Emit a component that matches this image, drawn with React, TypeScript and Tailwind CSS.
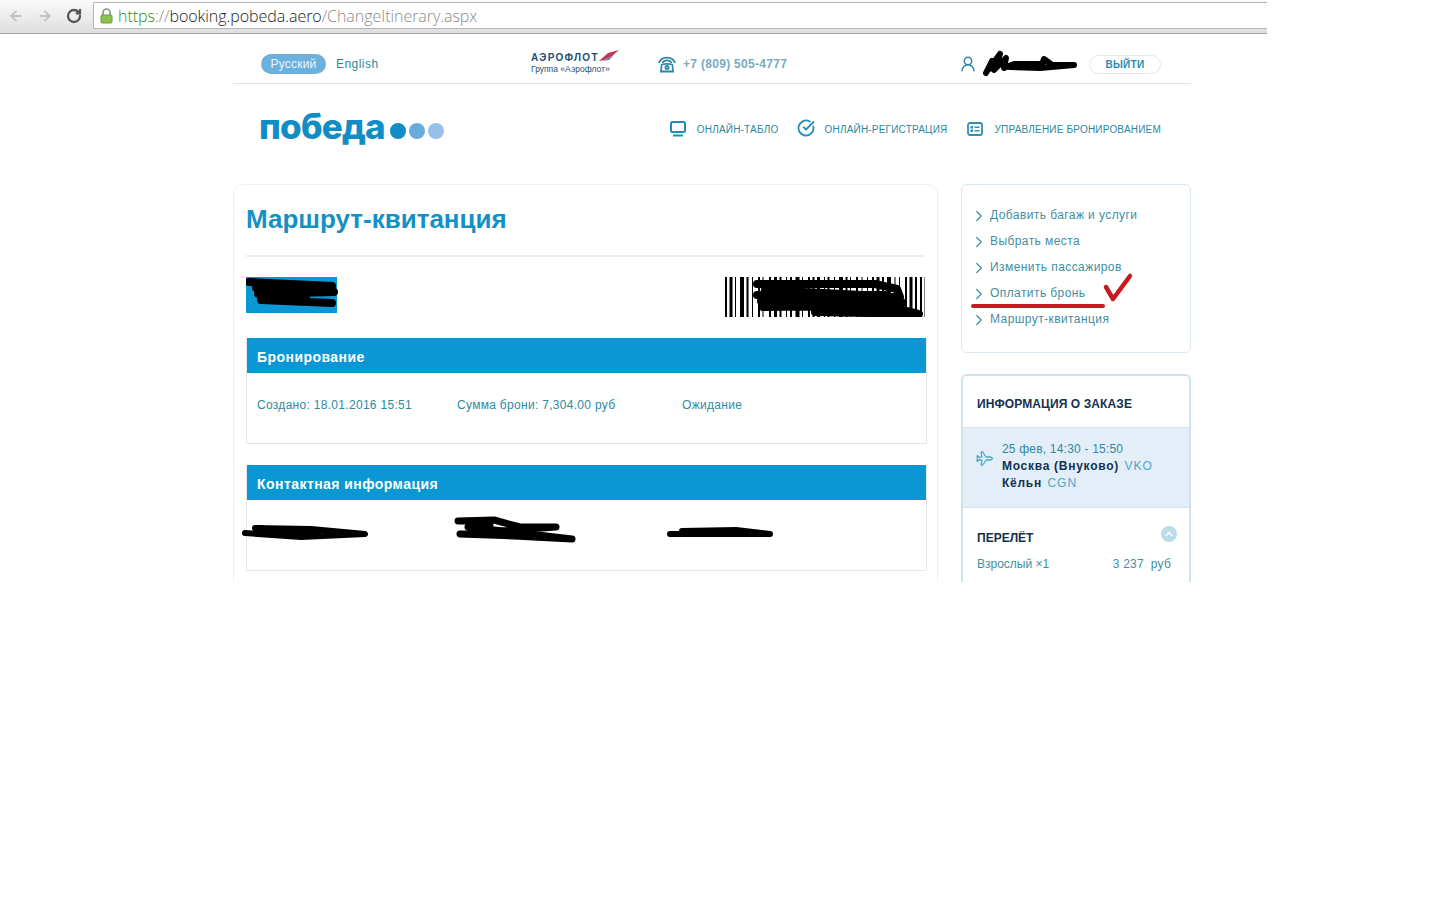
import { ChevronRight, ChevronUp, Plane, RotateCw, ArrowLeft, ArrowRight, UserRound, CircleCheckBig } from "lucide-react";

const sideLinks = [
  "Добавить багаж и услуги",
  "Выбрать места",
  "Изменить пассажиров",
  "Оплатить бронь",
  "Маршрут-квитанция",
];

function Scribble({ d, w, h, sw = 5, className = "" }: { d: string; w: number; h: number; sw?: number; className?: string }) {
  return (
    <svg width={w} height={h} viewBox={`0 0 ${w} ${h}`} className={className} fill="none">
      <path d={d} stroke="#000" strokeWidth={sw} strokeLinecap="round" strokeLinejoin="round" />
    </svg>
  );
}

function Barcode() {
  const bars = [2, 1, 3, 1, 1, 2, 4, 1, 2, 2, 1, 3, 2, 1, 1, 4, 2, 1, 3, 1, 2, 3, 1, 1, 2, 2, 4, 1, 1, 3, 2, 1, 2, 1, 3, 2, 1, 1, 2, 3, 1, 2, 4, 1, 2, 1, 1, 3, 2, 2, 1, 3, 1, 2, 2, 1, 3, 1, 2, 1, 4, 2, 1, 2, 1, 3, 2, 1, 3, 1, 2, 1, 2, 1, 3, 1, 2, 1, 1, 2, 3];
  let x = 0;
  return (
    <svg width={200} height={40} viewBox="0 0 200 40">
      {bars.map((b, i) => {
        const cur = x;
        x += b + (i % 3 === 0 ? 0.5 : 1);
        return i % 2 === 0 ? <rect key={i} x={cur} y={0} width={b} height={40} fill="#000" /> : null;
      })}
      <path d="M32 7 L150 7 L172 12 L175 20 L40 13 M32 18 L160 18 L178 26 L36 24 M38 30 L120 29 L175 32 L194 37 L90 35" stroke="#000" strokeWidth={8} fill="none" strokeLinecap="round" strokeLinejoin="round" />
    </svg>
  );
}

function SectionHead({ children }: { children: string }) {
  return (
    <div className="h-[35px] bg-[#0a97d3] pl-[10px] pt-[4px] flex items-center text-[14px] font-bold tracking-[0.45px] text-white">
      {children}
    </div>
  );
}

export default function App() {
  return (
    <div className="relative min-h-[900px] bg-white font-['Liberation_Sans',Arial,sans-serif]">
      {/* browser bar */}
      <div className="w-[1267px] h-[34px] border-b border-[#a0a0a0] bg-gradient-to-b from-[#fbfbfb] to-[#dedede] flex items-start pt-[2px]">
        <div className="w-[93px] h-[27px] flex items-center pl-[8px] gap-[13px]">
          <ArrowLeft className="w-[16px] h-[16px] text-[#c4c4c4]" strokeWidth={3} />
          <ArrowRight className="w-[16px] h-[16px] text-[#c4c4c4]" strokeWidth={3} />
          <RotateCw className="w-[16px] h-[16px] text-[#555]" strokeWidth={3.4} />
        </div>
        <div className="flex-1 h-[27px] bg-white border border-[#b5b5b5] border-r-0 rounded-l-[2px] flex items-center pl-[6px] font-['Open_Sans',sans-serif] text-[16px] font-light tracking-[-0.05px]">
          <svg width="13" height="16" viewBox="0 0 13 16" fill="none" className="mr-[5px]">
            <path d="M3 7 V4.5 a3.5 3.5 0 0 1 7 0 V7" stroke="#8a8a8a" strokeWidth="1.6" />
            <rect x="1" y="7" width="11" height="8" rx="1" fill="#8cc34f" stroke="#6d9c3a" />
          </svg>
          <span className="text-[#2f8a1f]">https</span>
          <span className="text-[#8a8a8a]">://</span>
          <span className="text-[#222]">booking.pobeda.aero</span>
          <span className="text-[#8a8a8a]">/ChangeItinerary.aspx</span>
        </div>
      </div>

      <div className="w-[958px] ml-[233px]">
        {/* top row */}
        <div className="h-[50px] pt-[11px] border-b border-[#dbe7ec] flex items-center">
          <div className="w-[298px] pl-[28px] flex items-center">
            <span className="w-[65px] h-[20px] rounded-full bg-[#6cb1de] text-[#e8f4fb] text-[12px] tracking-[0.2px] flex items-center justify-center">Русский</span>
            <span className="ml-[10px] text-[12px] tracking-[0.45px] text-[#2d87a0]">English</span>
          </div>
          <div className="w-[127px] h-[26px] pt-[1px]">
            <div className="text-[10px] font-bold tracking-[1.3px] leading-[11px] text-[#1f4f74] flex items-center">
              АЭРОФЛОТ
              <svg width="20" height="12" viewBox="0 0 20 12" className="-mt-[3px] shrink-0">
                <path d="M0 11 L9 3 L20 0 L13 6 L5 10Z" fill="#c8354a" />
                <path d="M3 11 L11 7 L15 5 L10 10Z" fill="#6a7fb0" />
              </svg>
            </div>
            <div className="text-[8.5px] leading-[11px] mt-[1px] text-[#1f4f74]">Группа «Аэрофлот»</div>
          </div>
          <svg width="18" height="18" viewBox="0 0 18 18" fill="none" stroke="#2d87a8" strokeWidth="1.8" className="shrink-0">
            <path d="M1 8 C3 0.8 15 0.8 17 8" />
            <path d="M4.5 8 C6 4.6 12 4.6 13.5 8" />
            <path d="M3 16.5 L15 16.5 L14.4 10 C14 8.5 4 8.5 3.6 10Z" />
            <circle cx="9" cy="12.6" r="1.6" />
          </svg>
          <span className="ml-[7px] w-[276px] text-[12px] font-bold tracking-[0.3px] text-[#7aaac4]">+7 (809) 505-4777</span>
          <UserRound className="w-[18px] h-[18px] text-[#2d87a8] shrink-0" strokeWidth={2} />
          <Scribble className="ml-[3px] shrink-0" w={100} h={28} sw={6} d="M6 23 L12 11 L8 20 L20 4 L14 20 L26 8 L24 18 L34 14 L62 14 L64 9 L72 15 L94 15 L60 18 L30 17" />
          <span className="ml-[9px] w-[72px] h-[19px] rounded-full border border-[#dfeaf0] text-[10px] font-bold text-[#2b8cb3] tracking-[0.3px] flex items-center justify-center">ВЫЙТИ</span>
        </div>

        {/* logo row */}
        <div className="h-[100px] flex items-center pb-[9px]">
          <div className="ml-[26px] flex items-center">
            <span className="mb-[6px] font-['Inter',sans-serif] text-[35px] leading-none font-extrabold tracking-[-0.8px] text-[#0f8dc4]">победа</span>
            <span className="mt-[2px] ml-[5px] w-[16px] h-[16px] rounded-full bg-[#0f8dc4]" />
            <span className="mt-[2px] ml-[3px] w-[16px] h-[16px] rounded-full bg-[#69abdc]" />
            <span className="mt-[2px] ml-[3px] w-[16px] h-[16px] rounded-full bg-[#97c0e8]" />
          </div>
          <div className="ml-auto mr-[30px] flex items-center text-[10px] tracking-[0.2px] text-[#2d87a0]">
            <svg width="16" height="16" viewBox="0 0 16 16" fill="none" stroke="#1c8dbd" strokeWidth="2" className="-mt-[2px]">
              <rect x="1" y="1" width="14" height="10" rx="1.5" />
              <path d="M3 14.5 H13" />
            </svg>
            <span className="ml-[11px]">ОНЛАЙН-ТАБЛО</span>
            <CircleCheckBig className="-mt-[3px] ml-[19px] w-[18px] h-[18px] text-[#2d8fb5]" strokeWidth={2.4} />
            <span className="ml-[9px]">ОНЛАЙН-РЕГИСТРАЦИЯ</span>
            <svg width="16" height="14" viewBox="0 0 16 14" fill="none" className="-mt-[2px] ml-[20px]">
              <rect x="1" y="1" width="14" height="12" rx="2" stroke="#2d8fb5" strokeWidth="1.8" />
              <rect x="3.5" y="4" width="2.5" height="2.5" fill="#2d8fb5" />
              <rect x="3.5" y="7.5" width="2.5" height="2.5" fill="#2d8fb5" />
              <path d="M7.5 5.2 H12.5 M7.5 8.8 H12.5" stroke="#2d8fb5" strokeWidth="1.5" />
            </svg>
            <span className="ml-[11px]">УПРАВЛЕНИЕ БРОНИРОВАНИЕМ</span>
          </div>
        </div>

        {/* content, cut off at the bottom */}
        <div className="h-[398px] overflow-hidden flex items-start justify-between">
          <div className="w-[705px] h-[420px] border border-[#ebf1f4] rounded-[10px] px-[12px]">
            <h1 className="pt-[19px] h-[72px] text-[26px] leading-[30px] font-bold text-[#1491c4] border-b-2 border-[#ebeff1]">
              Маршрут-квитанция
            </h1>
            <div className="mt-[20px] h-[40px] flex items-start justify-between">
              <div className="relative w-[91px] h-[36px] bg-[#0a97d3]">
                <Scribble className="absolute left-0 top-0" w={92} h={32} sw={8} d="M3 5 L86 9 L10 11 L88 15 L12 17 L60 21 L15 23 L86 26" />
              </div>
              <Barcode />
            </div>
            <div className="mt-[21px] -mr-[2px] border border-t-0 border-[#e2e8ea]">
              <SectionHead>Бронирование</SectionHead>
              <div className="h-[70px] pl-[10px] pt-[24px] flex text-[12px] leading-[16px] tracking-[0.3px] text-[#2d8aa0]">
                <span className="w-[200px]">Создано: 18.01.2016 15:51</span>
                <span className="w-[225px]">Сумма брони: 7,304.00 руб</span>
                <span>Ожидание</span>
              </div>
            </div>
            <div className="mt-[21px] -mr-[2px] border border-t-0 border-[#e2e8ea] relative">
              <SectionHead>Контактная информация</SectionHead>
              <div className="h-[70px]" />
              <Scribble className="absolute left-[-6px] top-[55px]" w={132} h={22} sw={6} d="M4 13 L60 17 L124 14 L70 9 L14 8 L80 16" />
              <Scribble className="absolute left-[207px] top-[50px]" w={122} h={28} sw={7} d="M4 6 L40 5 L66 12 L102 12 L6 19 L60 21 L118 24 L14 12 L36 10" />
              <Scribble className="absolute left-[419px] top-[58px]" w={112} h={16} sw={6} d="M4 11 L104 11 L70 7 L16 8" />
            </div>
          </div>

          <div className="w-[230px]">
            <div className="h-[169px] border border-[#d9e7f0] rounded-[6px] pl-[14px] pt-[17px]">
              {sideLinks.map((l) => (
                <div key={l} className="h-[26px] flex items-center text-[12px] tracking-[0.42px] text-[#3f8f9f]">
                  <ChevronRight className="-ml-[6px] w-[18px] h-[18px] mt-[2px] text-[#3f8f9f]" strokeWidth={1.6} />
                  <span className="ml-[2px]">{l}</span>
                </div>
              ))}
            </div>
            <div className="mt-[21px] border-2 border-b-0 border-[#cfe3ee] rounded-t-[6px] h-[260px]">
              <div className="h-[51px] pl-[14px] pt-[4px] flex items-center text-[12px] font-bold tracking-[0.1px] text-[#14304f]">ИНФОРМАЦИЯ О ЗАКАЗЕ</div>
              <div className="h-[81px] bg-[#e3eef8] border-y border-[#d4e4ee] flex pl-[12px] pt-[13px]">
                <Plane className="rotate-45 w-[17px] h-[17px] mt-[9px] text-[#4ea6c8]" strokeWidth={1.8} />
                <div className="ml-[10px] text-[12px] leading-[17px] tracking-[0.2px]">
                  <div className="text-[#2d8aa0]">25 фев, 14:30 - 15:50</div>
                  <div><b className="text-[#14304f] tracking-[0.72px]">Москва (Внуково)</b> <span className="ml-[2px] tracking-[1px] text-[#4ea6c8]">VKO</span></div>
                  <div><b className="text-[#14304f] tracking-[0.72px]">Кёльн</b> <span className="ml-[2px] tracking-[1px] text-[#4ea6c8]">CGN</span></div>
                </div>
              </div>
              <div className="pl-[14px] pr-[18px] relative">
                <div className="pt-[22px] text-[12px] leading-[16px] font-bold text-[#14304f]">ПЕРЕЛЁТ</div>
                <span className="absolute right-[12px] top-[18px] w-[16px] h-[16px] rounded-full bg-[#bcdbe8] flex items-center justify-center">
                  <ChevronUp className="w-[12px] h-[12px] text-white" strokeWidth={3} />
                </span>
                <div className="mt-[9px] flex justify-between text-[12px] text-[#3f8f9f]">
                  <span>Взрослый ×1</span>
                  <span className="tracking-[0.2px]">3 237 &nbsp;руб</span>
                </div>
              </div>
            </div>
          </div>
        </div>
      </div>

      {/* marker annotation on top of the screenshot */}
      <svg className="absolute left-[960px] top-[265px]" width="180" height="50" viewBox="0 0 180 50" fill="none">
        <path d="M13 41 L143 41" stroke="#c8191e" strokeWidth="4" strokeLinecap="round" />
        <path d="M146 22 L153 34 L170 11" stroke="#c8191e" strokeWidth="4.5" strokeLinecap="round" strokeLinejoin="round" />
      </svg>
    </div>
  );
}
